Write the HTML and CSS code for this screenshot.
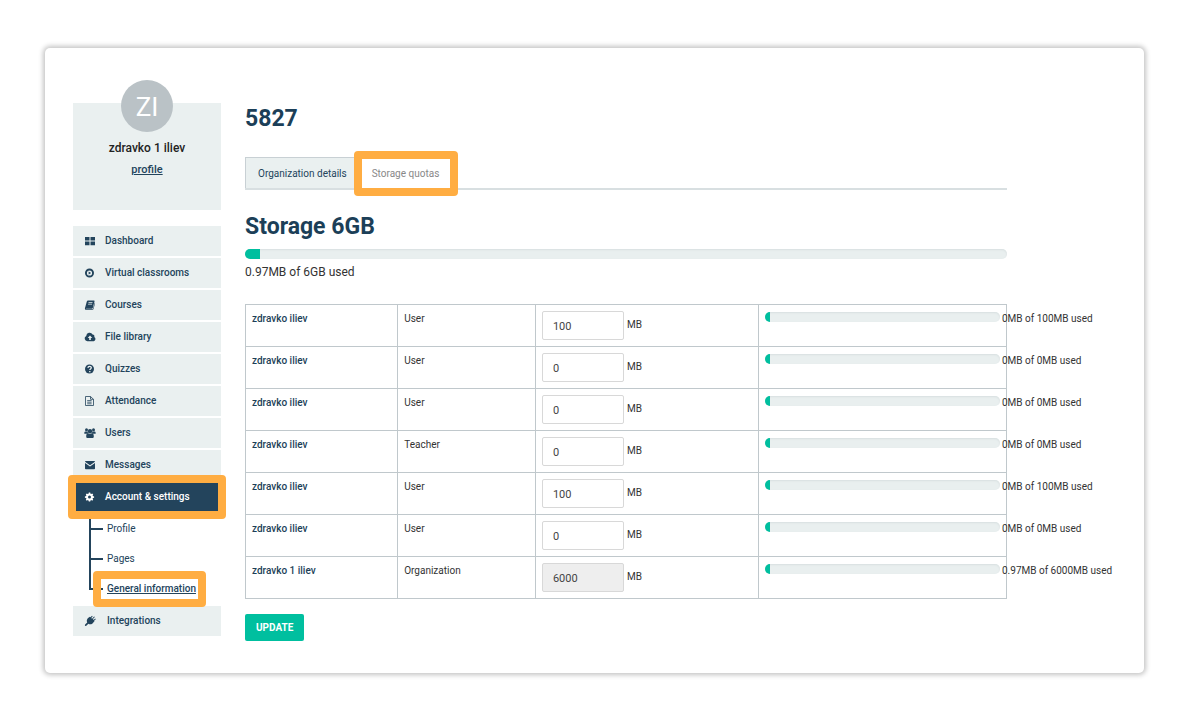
FILE: index.html
```
<!DOCTYPE html>
<html lang="en">
<head>
<meta charset="utf-8">
<title>Storage quotas</title>
<link rel="stylesheet" href="styles.css">
</head>
<body>
<div class="card">
  <aside class="sidebar">
    <section class="user">
      <div class="avatar">ZI</div>
      <strong class="user-name">zdravko 1 iliev</strong>
      <a class="user-link" href="#">profile</a>
    </section>
    <nav class="menu">
      <a class="item" href="#"><svg class="icon" viewBox="0 0 12 12"><path d="M1 2h4.500v3.600H1zM6.500 2H11v3.600H6.500zM1 6.600h4.500v3.600H1zM6.500 6.600H11v3.600H6.500z"/></svg>Dashboard</a>
      <a class="item" href="#"><svg class="icon" viewBox="0 0 12 12"><path fill-rule="evenodd" d="M5.500 1.500a4.500 4.500 0 1 0 0 9 4.500 4.500 0 0 0 0-9zm0 1.900a2.600 2.600 0 1 1 0 5.200 2.600 2.600 0 0 1 0-5.200z"/><path d="M4.600 4.500 7.200 6 4.600 7.500z"/></svg>Virtual classrooms</a>
      <a class="item" href="#"><svg class="icon" viewBox="0 0 12 12"><path fill-rule="evenodd" d="M4 1.500h5.700c.7 0 1 .4.800 1L8.800 9c-.2.500-.5.700-1 .7H2.400c-.5 0-.6.600 0 .6h5.800c.4 0 .7-.2.800-.6l1.700-6c.3.200.4.500.3.900L9.500 10c-.2.700-.7 1.100-1.400 1.100H2.200C1.200 11.100.6 10 1 9.100L2.800 2.400c.2-.6.600-.9 1.200-.9zm.6 1.800-.2.700h4l.2-.7zm-.4 1.500-.2.700h4l.2-.7z"/></svg>Courses</a>
      <a class="item" href="#"><svg class="icon" viewBox="0 0 12 12"><path fill-rule="evenodd" d="M3.400 10.200A2.800 2.800 0 0 1 2.200 4.900a3.400 3.400 0 0 1 6.400-1.300 2 2 0 0 1 1.700 2.500 2.200 2.200 0 0 1-.6 4.100zM6 4.600 3.700 7H5.200v2h1.600V7h1.500z"/></svg>File library</a>
      <a class="item" href="#"><svg class="icon" viewBox="0 0 12 12"><circle cx="5.500" cy="6" r="4.500"/><path class="cut" d="M3.900 4.900c.1-1 .7-1.500 1.700-1.500s1.700.6 1.700 1.400c0 1.100-1.500 1.100-1.500 2.200M5.800 8v1.200"/></svg>Quizzes</a>
      <a class="item" href="#"><svg class="icon" viewBox="0 0 12 12"><path class="line" d="M1.500 1.500h5l3 2.800v6.200h-8zM6.500 1.500V4.300H9.500M3.200 5.600h4.400M3.200 7.200h4.400M3.200 8.800h4.400"/></svg>Attendance</a>
      <a class="item" href="#"><svg class="icon" viewBox="0 0 12 12"><circle cx="2.500" cy="2.800" r="1.500"/><circle cx="9.500" cy="2.800" r="1.500"/><path d="M.3 6.700c0-1.400.2-2.300 1-2.300h2.300l.6 2.300zM11.700 6.700c0-1.400-.2-2.300-1-2.300H8.400l-.6 2.300z"/><circle cx="6" cy="4.300" r="2.200"/><path d="M2.200 9.400c0-1.900.7-3.100 2-3.100 1.100.8 2.500.8 3.600 0 1.300 0 2 1.200 2 3.100 0 1-.6 1.600-1.500 1.600H3.700c-.9 0-1.500-.6-1.500-1.600z"/></svg>Users</a>
      <a class="item" href="#"><svg class="icon" viewBox="0 0 12 12"><path d="M1 2.800c0-.5.300-.8.800-.8h8.400c.5 0 .8.300.8.800L6 6.200zM1 4l5 3.500L11 4v5.400c0 .5-.3.800-.8.800H1.800c-.5 0-.8-.3-.8-.8z"/></svg>Messages</a>
      <a class="item active ring" href="#"><svg class="icon" viewBox="0 0 12 12"><path fill-rule="evenodd" d="M4.800 1.500h1.400l.3 1.200.7.300 1-.6 1 1-.6 1 .3.700 1.200.3v1.300l-1.200.3-.3.700.6 1-1 1-1-.6-.7.300-.3 1.200H4.800l-.3-1.200-.7-.3-1 .6-1-1 .6-1-.3-.7L.9 6.700V5.400l1.200-.3.300-.7-.6-1 1-1 1 .6.700-.3zm.7 3a1.500 1.500 0 1 0 0 3 1.500 1.500 0 0 0 0-3z"/></svg>Account &amp; settings</a>
      <div class="submenu">
        <a class="sub" href="#">Profile</a>
        <a class="sub" href="#">Pages</a>
        <a class="sub current ring" href="#">General information</a>
      </div>
      <a class="item last" href="#"><svg class="icon" viewBox="0 0 12 12"><path d="M10.900 2.100 8.900 4.100l.8.800 1.500-1.400.6.700L10.100 5.700l.4.500-.8.700C8.500 9 6.500 9.900 4.400 8.700L2.300 10.700.9 10.900 1.100 9.600 3.200 7.500C2.200 5.500 3 3.700 5.100 2.300l.9-.6.500.6L8 .8l.7.600L7.200 2.900l.9.800 2-2.200z"/></svg>Integrations</a>
    </nav>
  </aside>
  <main class="main">
    <h1 class="title">5827</h1>
    <div class="tabs">
      <a class="tab" href="#">Organization details</a>
      <a class="tab selected ring" href="#">Storage quotas</a>
    </div>
    <h2 class="title">Storage 6GB</h2>
    <div class="bar total"><div class="fill"></div></div>
    <p class="summary">0.97MB of 6GB used</p>
    <form>
      <table class="quotas">
        <colgroup><col class="col-name"><col class="col-role"><col class="col-quota"><col class="col-usage"></colgroup>
        <tbody>
          <tr><th scope="row">zdravko iliev</th><td>User</td><td><label class="quota"><input type="text" value="100">MB</label></td><td><div class="usage"><div class="bar"><div class="fill"></div></div><span>0MB of 100MB used</span></div></td></tr>
          <tr><th scope="row">zdravko iliev</th><td>User</td><td><label class="quota"><input type="text" value="0">MB</label></td><td><div class="usage"><div class="bar"><div class="fill"></div></div><span>0MB of 0MB used</span></div></td></tr>
          <tr><th scope="row">zdravko iliev</th><td>User</td><td><label class="quota"><input type="text" value="0">MB</label></td><td><div class="usage"><div class="bar"><div class="fill"></div></div><span>0MB of 0MB used</span></div></td></tr>
          <tr><th scope="row">zdravko iliev</th><td>Teacher</td><td><label class="quota"><input type="text" value="0">MB</label></td><td><div class="usage"><div class="bar"><div class="fill"></div></div><span>0MB of 0MB used</span></div></td></tr>
          <tr><th scope="row">zdravko iliev</th><td>User</td><td><label class="quota"><input type="text" value="100">MB</label></td><td><div class="usage"><div class="bar"><div class="fill"></div></div><span>0MB of 100MB used</span></div></td></tr>
          <tr><th scope="row">zdravko iliev</th><td>User</td><td><label class="quota"><input type="text" value="0">MB</label></td><td><div class="usage"><div class="bar"><div class="fill"></div></div><span>0MB of 0MB used</span></div></td></tr>
          <tr><th scope="row">zdravko 1 iliev</th><td>Organization</td><td><label class="quota"><input type="text" value="6000" disabled>MB</label></td><td><div class="usage"><div class="bar"><div class="fill"></div></div><span>0.97MB of 6000MB used</span></div></td></tr>
        </tbody>
      </table>
      <button class="update" type="submit">UPDATE</button>
    </form>
  </main>
</div>
</body>
</html>
```
FILE: styles.css
```
* { box-sizing: border-box; }

body {
  margin: 0;
  padding: 48px 45px;
  background: #fff;
  color: #333;
  font: 10px/16px Roboto, sans-serif;
}

a { color: #23445c; text-decoration: none; }

.card {
  display: flex;
  gap: 24px;
  padding: 55px 137px 32px 28px;
  border-radius: 5px;
  box-shadow: 0 0 5px 2px #c4c4c4;
}

.sidebar { flex: none; width: 148px; }

.user {
  display: flex;
  flex-direction: column;
  align-items: center;
  height: 107px;
  margin-bottom: 16px;
  background: #eaf0f0;
}

.avatar {
  width: 52px;
  height: 52px;
  margin-top: -23px;
  border-radius: 50%;
  background: #bac2c6;
  color: #fff;
  font-size: 26px;
  line-height: 54px;
  text-align: center;
}

.user-name {
  margin-top: 8px;
  color: #222;
  font-size: 12px;
  font-weight: 500;
}

.user-link {
  margin-top: 6px;
  font-size: 11px;
  font-weight: 500;
  text-decoration: underline;
}

.menu { display: flex; flex-direction: column; gap: 2px; }

.item {
  display: flex;
  align-items: center;
  gap: 9px;
  height: 30px;
  padding-left: 11px;
  background: #eaf0f0;
  font-weight: 500;
}

.icon { flex: none; width: 12px; height: 12px; fill: currentColor; }
.cut { fill: none; stroke: #eaf0f0; stroke-width: 1.300; }
.line { fill: none; stroke: currentColor; stroke-width: 0.800; }

.active { background: #23445c; color: #fff; }
.last { gap: 11px; }

.ring { position: relative; z-index: 1; }
.ring::after {
  content: "";
  position: absolute;
  inset: -7px -5px;
  border: 8px solid #ffad42;
  border-radius: 4px;
  pointer-events: none;
}

.submenu {
  display: flex;
  flex-direction: column;
  gap: 14px;
  margin: 0 0 7px 16px;
  padding-top: 7px;
  background: linear-gradient(#23445c, #23445c) no-repeat 0 0 / 2px calc(100% - 7px);
}

.sub { display: flex; align-items: center; gap: 4px; }
.sub::before {
  content: "";
  width: 14px;
  height: 2px;
  background: #23445c;
}

.current { font-weight: 500; text-decoration: underline; }
.current::after { inset: -10px 15px -10px 4px; }

.main { flex: 1; min-width: 0; }

.title {
  margin: 0;
  color: #1c3f58;
  font-size: 23px;
  line-height: 32px;
  font-weight: 700;
}

.tabs {
  display: flex;
  height: 33px;
  margin: 22px 0 21px;
  border-bottom: 2px solid #d8dfe1;
}

.tab {
  padding: 8px 12px;
  border: 1px solid #c8d0d4;
  border-width: 1px 0 0 1px;
  background: #eaf0f0;
}

.selected { border-color: transparent; background: #fff; color: #888; }
.selected::after { inset: -7px -7px -8px -6px; }

.bar {
  overflow: hidden;
  height: 10px;
  border-radius: 5px;
  background: #e9efef;
  box-shadow: inset 0 1px 2px #d8dfe0;
}

.fill { width: 2%; height: 100%; background: #00bf9f; }
.total { margin-top: 6px; }

.summary { margin: 5px 0 24px; font-size: 12px; }

.quotas {
  width: 100%;
  table-layout: fixed;
  border-collapse: collapse;
}

.col-name { width: 20%; }
.col-role { width: 18.1%; }
.col-quota { width: 29.3%; }
.col-usage { width: 32.6%; }

.quotas th, .quotas td {
  height: 42px;
  padding: 6px;
  border: 1px solid #c0c8cc;
  text-align: left;
  vertical-align: top;
}

.quotas th { color: #1c3f58; font-weight: 500; }

.quota { display: flex; gap: 3px; line-height: 28px; }
.quota input {
  width: 82px;
  height: 29px;
  padding: 2px 10px 0;
  border: 1px solid #d8d8d8;
  border-radius: 2px;
  background: #fff;
  color: #444;
  font: 11px Roboto, sans-serif;
}
.quota input:disabled { background: #eee; }

.usage { display: flex; gap: 2px; white-space: nowrap; }
.usage .bar { flex: none; width: 100%; margin-top: 1px; }

.update {
  display: block;
  height: 27px;
  margin-top: 15px;
  padding: 0 11px;
  border: 0;
  border-radius: 2px;
  background: #00bf9f;
  color: #fff;
  font: 700 10px Roboto, sans-serif;
}
```
